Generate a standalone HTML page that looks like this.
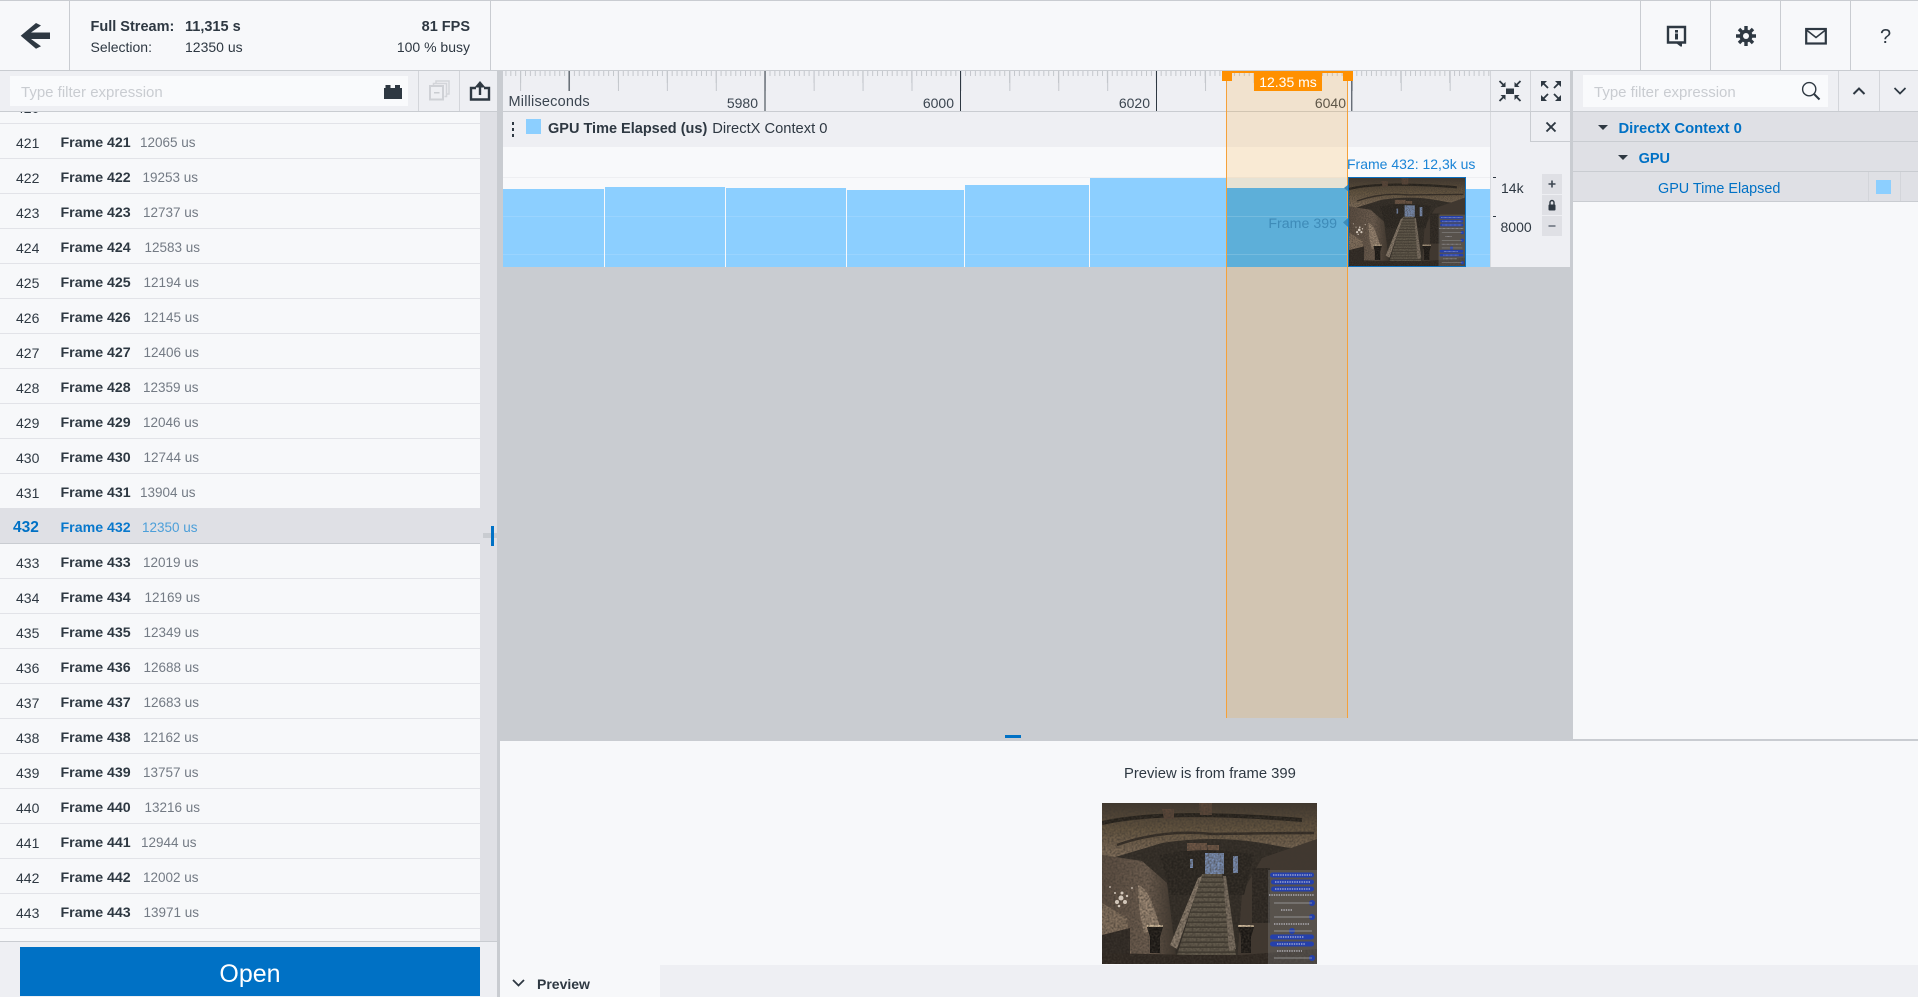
<!DOCTYPE html>
<html><head><meta charset="utf-8"><title>Frames</title>
<style>
*{box-sizing:border-box}
html,body{margin:0;padding:0;width:1918px;height:997px;overflow:hidden;background:#f7f8fa}
body{position:relative;font-family:"Liberation Sans",sans-serif;font-size:14px;color:#2e3842}
.a{position:absolute}
.t{position:absolute;white-space:nowrap;line-height:20px}
.b{font-weight:bold}
#list .r{position:absolute;left:0;width:480px;height:35px;border-bottom:1px solid #e2e3e8}
#list .n{position:absolute;left:16px;top:9px;line-height:20px}
#list .f{position:absolute;left:60.5px;top:9px;line-height:20px;font-weight:bold;font-size:14.2px}
#list .d{position:absolute;top:9px;line-height:20px;font-size:13.5px;color:#737a84}
#list .s{background:#dfe0e5;border-bottom:1px solid #c9ccd1;color:#0071c5;height:36px;top:508px}
#list .s .n{left:13px;top:10px;font-size:15.5px;font-weight:bold}
#list .s .f{top:10px;color:#0878cc}
#list .s .d{top:10px;color:#4c9fd9}
.ph{color:#c9ccd1;font-size:15px}
.blue{color:#0071c5}
</style></head><body>
<svg width="0" height="0" style="position:absolute">
<defs>
<filter id="nz" x="0" y="0" width="100%" height="100%"><feTurbulence type="fractalNoise" baseFrequency="0.5" numOctaves="2" seed="4"/><feColorMatrix values="0 0 0 0 0.05 0 0 0 0 0.04 0 0 0 0 0.03 1.5 0 0 0 -0.5"/></filter>
<linearGradient id="cg" x1="0" y1="0" x2="0" y2="1"><stop offset="0" stop-color="#40372e"/><stop offset=".45" stop-color="#63543f"/><stop offset="1" stop-color="#86735f"/></linearGradient>
<linearGradient id="lw" x1="0" y1="0" x2="1" y2="0"><stop offset="0" stop-color="#5a4c40"/><stop offset=".6" stop-color="#6e5e50"/><stop offset="1" stop-color="#3a322a"/></linearGradient>
<pattern id="stp" patternUnits="userSpaceOnUse" width="10" height="5"><rect width="10" height="5" fill="#625a4c"/><rect y="3.4" width="10" height="1.6" fill="#433d33"/></pattern>
<symbol id="scene" viewBox="0 0 215 161" preserveAspectRatio="none">
<rect width="215" height="161" fill="#2f2a24"/>
<path d="M0 0H215V50L160 40Q110 32 60 40L0 58Z" fill="url(#cg)"/>
<path d="M0 20Q60 6 200 17" fill="none" stroke="#231f19" stroke-width="4"/>
<path d="M15 42Q60 26 110 31Q170 30 212 30" fill="none" stroke="#322b24" stroke-width="2.5"/>
<path d="M60 6h12v10h-10zM97 0h13v12h-12z" fill="#5a4638"/>
<path d="M85 40h20v8h-20zM105 42h12v12h-10z" fill="#6e5645"/>
<path d="M0 52L40 58L65 80L75 161H0Z" fill="url(#lw)"/>
<path d="M36 82Q48 85 58 125L42 130Q35 100 36 82Z" fill="#9a8672"/>
<path d="M0 100L25 115L30 161H0Z" fill="#84715e"/>
<path d="M0 132L28 125V161H0Z" fill="#2d2722"/>
<path d="M215 36L160 55L140 90L135 161H215Z" fill="#413830"/>
<path d="M150 65h18v55h-18z" fill="#2a2520"/>
<path d="M58 52Q105 42 152 52L142 92H68Z" fill="#27231e"/>
<rect x="103" y="50" width="19" height="21" fill="#7a8fb5"/>
<path d="M88 56h3v9h-3zM131 53h5v17h-5z" fill="#7a8fb5"/>
<path d="M100 71H120L134 152H75Z" fill="url(#stp)"/>
<path d="M96 75L68 142L75 146L100 73Z" fill="#8a7c6c"/>
<path d="M121 73L127 148L134 146L124 73Z" fill="#7c7062"/>
<path d="M45 124h16l-3 10v16h-10v-16z" fill="#191613"/><rect x="45" y="122" width="16" height="2" fill="#cdb89a"/>
<path d="M136 124h16l-3 10v16h-10v-16z" fill="#191613"/><rect x="136" y="122" width="16" height="2" fill="#cdb89a"/>
<path d="M0 150L90 152H140L215 146V161H0Z" fill="#2d2620"/>
<rect width="215" height="161" filter="url(#nz)"/>
<g fill="#e8ddd0" opacity=".85"><circle cx="19" cy="95" r="2.5"/><circle cx="15" cy="99" r="2"/><circle cx="23" cy="99" r="2"/><circle cx="20" cy="90" r="1.5"/><circle cx="13" cy="90" r="1"/><circle cx="25" cy="93" r="1.2"/><circle cx="17" cy="103" r="1.3"/><circle cx="8" cy="84" r=".9"/><circle cx="30" cy="85" r=".9"/></g>
<rect x="166" y="67" width="49" height="94" fill="#8f8f8f" opacity=".3"/>
<g fill="#2540ab"><rect x="168" y="69.5" width="44" height="5" rx="2.5"/><rect x="169" y="76.5" width="43" height="5" rx="2.5"/><rect x="169" y="83.5" width="43" height="5" rx="2.5"/><rect x="168" y="131.5" width="44" height="5" rx="2.5"/><rect x="168" y="138.5" width="44" height="5" rx="2.5"/><circle cx="210" cy="100" r="3"/><circle cx="210" cy="114" r="3"/><circle cx="190" cy="128" r="3"/><circle cx="210" cy="155" r="3"/></g>
<g stroke="#d8d8e4" stroke-width=".9" stroke-dasharray="1.4 1" fill="none"><path d="M171 72h39M173 79h35M173 86h35M167 92h45M179 107h12M172 121h36M176 134h26M175 141h28M175 148h25"/></g>
<g stroke="#a5a5a5" stroke-width=".7" fill="none"><path d="M172 100h38M172 114h38M172 128h38M172 155h38"/></g>
</symbol>
<pattern id="t1" patternUnits="userSpaceOnUse" x="2.43" width="4.89" height="40"><rect width="1" height="5" fill="#c4c7cc"/></pattern>
<pattern id="t2" patternUnits="userSpaceOnUse" x="17.1" width="48.9" height="40"><rect width="1" height="12" fill="#c4c7cc"/></pattern>
<pattern id="t3" patternUnits="userSpaceOnUse" x="17.1" width="97.85" height="40"><rect x="0" width="1" height="20" fill="#c4c7cc"/><rect x="48.9" width="1" height="20" fill="#c4c7cc"/></pattern>
</defs></svg>

<!-- top header -->
<div class="a" style="left:0;top:0;width:1918px;height:1px;background:#c9ccd1"></div>
<div class="a" style="left:0;top:70px;width:1918px;height:1px;background:#c9ccd1"></div>
<div class="a" style="left:69px;top:0;width:1px;height:70px;background:#c9ccd1"></div>
<div class="a" style="left:490px;top:0;width:1px;height:70px;background:#c9ccd1"></div>
<div class="a" style="left:1640px;top:0;width:1px;height:70px;background:#c9ccd1"></div>
<div class="a" style="left:1710px;top:0;width:1px;height:70px;background:#c9ccd1"></div>
<div class="a" style="left:1780px;top:0;width:1px;height:70px;background:#c9ccd1"></div>
<div class="a" style="left:1850px;top:0;width:1px;height:70px;background:#c9ccd1"></div>
<svg class="a" style="left:15px;top:18px" width="40" height="36" viewBox="15 18 40 36"><path d="M20.7 35.7L36 23L41 25.5L31 32.5H50V39H31L41 46.2L36 48.7Z" fill="#2e3842"/></svg>
<div class="t b" style="left:90.5px;top:17px;font-size:14.5px">Full Stream:</div>
<div class="t b" style="left:185px;top:17px;font-size:14.5px">11,315 s</div>
<div class="t" style="left:90.5px;top:37px">Selection:</div>
<div class="t" style="left:185px;top:37px">12350 us</div>
<div class="t b" style="right:1448px;top:17px;font-size:14.5px">81 FPS</div>
<div class="t" style="right:1448px;top:37px">100 % busy</div>
<svg class="a" style="left:1664px;top:23px" width="24" height="24" viewBox="0 0 24 24"><path d="M4 4H21V19.5H4Z" fill="none" stroke="#2e3842" stroke-width="2.4"/><path d="M12 20h6v3.5h-1.5z" fill="#2e3842"/><rect x="11" y="7" width="3" height="2.6" fill="#2e3842"/><rect x="11" y="10.5" width="3" height="6" fill="#2e3842"/></svg>
<svg class="a" style="left:1734px;top:24px" width="24" height="24" viewBox="0 0 24 24"><g stroke="#2e3842" stroke-width="3.4"><path d="M12 2V22M2 12H22M5 5L19 19M19 5L5 19"/></g><circle cx="12" cy="12" r="6.5" fill="#2e3842"/><circle cx="12" cy="12" r="3" fill="#f7f8fa"/></svg>
<svg class="a" style="left:1805px;top:27px" width="22" height="18" viewBox="0 0 22 18"><rect x="1.2" y="2" width="19.6" height="14.5" fill="none" stroke="#2e3842" stroke-width="2.2"/><path d="M1.5 3L11 10.5L20.5 3" fill="none" stroke="#2e3842" stroke-width="1.6"/></svg>
<div class="t" style="left:1880px;top:26px;font-size:20px;line-height:22px;color:#2e3842">?</div>

<!-- left filter row -->
<div class="a" style="left:0;top:71px;width:497px;height:40px;background:#eeeff3"></div>
<div class="a" style="left:10px;top:76px;width:398px;height:30px;background:#f9fafc"></div>
<div class="t ph" style="left:21px;top:83px">Type filter expression</div>
<svg class="a" style="left:384px;top:84px" width="18" height="15" viewBox="0 0 18 15"><rect y="4" width="18" height="11" fill="#2e3842"/><rect x="1.5" y="1" width="5" height="3" fill="#2e3842"/><rect x="11" y="1" width="5" height="3" fill="#2e3842"/></svg>
<div class="a" style="left:418px;top:71px;width:1px;height:40px;background:#d3d5da"></div>
<div class="a" style="left:459px;top:71px;width:1px;height:40px;background:#d3d5da"></div>
<svg class="a" style="left:429px;top:80px" width="21" height="21" viewBox="0 0 21 21"><g fill="none" stroke="#d3d5da" stroke-width="1.5"><path d="M7 3V1H20V14H18"/><path d="M4.5 5.5V3.5H17.5V16.5H15.5"/></g><rect x="1" y="6" width="13" height="13.5" fill="#eeeff3" stroke="#cfd1d6" stroke-width="2"/><rect x="5" y="12" width="5.5" height="1.5" fill="#c9ccd1"/></svg>
<svg class="a" style="left:469px;top:80px" width="22" height="21" viewBox="0 0 22 21"><path d="M7 8H2V19.5H20V8H15" fill="none" stroke="#2e3842" stroke-width="2.4"/><path d="M11 15V3" stroke="#2e3842" stroke-width="2.4"/><path d="M5.5 7.5L11 1L16.5 7.5Z" fill="#2e3842"/></svg>
<div class="a" style="left:0;top:111px;width:497px;height:1px;background:#c9ccd1"></div>

<!-- list -->
<div id="list" class="a" style="left:0;top:112px;width:480px;height:829px;overflow:hidden">
<div style="position:absolute;left:0;top:-112px;width:480px;height:1000px">
<div class="r" style="top:89px"><span class="n">420</span><span class="f">Frame 420</span><span class="d" style="left:142px">14175 us</span></div>
<div class="r" style="top:124px"><span class="n">421</span><span class="f">Frame 421</span><span class="d" style="left:140px">12065 us</span></div>
<div class="r" style="top:159px"><span class="n">422</span><span class="f">Frame 422</span><span class="d" style="left:142.5px">19253 us</span></div>
<div class="r" style="top:194px"><span class="n">423</span><span class="f">Frame 423</span><span class="d" style="left:143px">12737 us</span></div>
<div class="r" style="top:229px"><span class="n">424</span><span class="f">Frame 424</span><span class="d" style="left:144.5px">12583 us</span></div>
<div class="r" style="top:264px"><span class="n">425</span><span class="f">Frame 425</span><span class="d" style="left:143.5px">12194 us</span></div>
<div class="r" style="top:299px"><span class="n">426</span><span class="f">Frame 426</span><span class="d" style="left:143.5px">12145 us</span></div>
<div class="r" style="top:334px"><span class="n">427</span><span class="f">Frame 427</span><span class="d" style="left:143.5px">12406 us</span></div>
<div class="r" style="top:369px"><span class="n">428</span><span class="f">Frame 428</span><span class="d" style="left:143px">12359 us</span></div>
<div class="r" style="top:404px"><span class="n">429</span><span class="f">Frame 429</span><span class="d" style="left:143px">12046 us</span></div>
<div class="r" style="top:439px"><span class="n">430</span><span class="f">Frame 430</span><span class="d" style="left:143.5px">12744 us</span></div>
<div class="r" style="top:474px"><span class="n">431</span><span class="f">Frame 431</span><span class="d" style="left:140px">13904 us</span></div>
<div class="r s"><span class="n">432</span><span class="f">Frame 432</span><span class="d" style="left:142px">12350 us</span></div>
<div class="r" style="top:544px"><span class="n">433</span><span class="f">Frame 433</span><span class="d" style="left:143px">12019 us</span></div>
<div class="r" style="top:579px"><span class="n">434</span><span class="f">Frame 434</span><span class="d" style="left:144.5px">12169 us</span></div>
<div class="r" style="top:614px"><span class="n">435</span><span class="f">Frame 435</span><span class="d" style="left:143.5px">12349 us</span></div>
<div class="r" style="top:649px"><span class="n">436</span><span class="f">Frame 436</span><span class="d" style="left:143.5px">12688 us</span></div>
<div class="r" style="top:684px"><span class="n">437</span><span class="f">Frame 437</span><span class="d" style="left:143.5px">12683 us</span></div>
<div class="r" style="top:719px"><span class="n">438</span><span class="f">Frame 438</span><span class="d" style="left:143px">12162 us</span></div>
<div class="r" style="top:754px"><span class="n">439</span><span class="f">Frame 439</span><span class="d" style="left:143px">13757 us</span></div>
<div class="r" style="top:789px"><span class="n">440</span><span class="f">Frame 440</span><span class="d" style="left:144.5px">13216 us</span></div>
<div class="r" style="top:824px"><span class="n">441</span><span class="f">Frame 441</span><span class="d" style="left:141px">12944 us</span></div>
<div class="r" style="top:859px"><span class="n">442</span><span class="f">Frame 442</span><span class="d" style="left:143px">12002 us</span></div>
<div class="r" style="top:894px"><span class="n">443</span><span class="f">Frame 443</span><span class="d" style="left:143.5px">13971 us</span></div>
</div></div>
<div class="a" style="left:480px;top:112px;width:17px;height:829px;background:#dfe0e5"></div>
<div class="a" style="left:483px;top:533px;width:14px;height:5px;background:#c9ccd1"></div>
<div class="a" style="left:491px;top:526px;width:3px;height:20px;background:#0071c5"></div>

<!-- open -->
<div class="a" style="left:0;top:941px;width:497px;height:56px;background:#eeeff3;border-top:1px solid #c9ccd1"></div>
<div class="a" style="left:20px;top:947px;width:460px;height:49px;background:#0071c5;color:#fff;font-size:25px;line-height:55px;text-align:center">Open</div>

<!-- splitter -->
<div class="a" style="left:497px;top:71px;width:6px;height:670px;background:#c9ccd1"></div>
<div class="a" style="left:497px;top:741px;width:3px;height:256px;background:#c9ccd1"></div>

<!-- ruler -->
<div class="a" style="left:503px;top:71px;width:1067px;height:40px;background:#eeeff3"></div>
<svg class="a" style="left:503px;top:71px" width="987" height="40">
<rect width="987" height="40" fill="url(#t1)"/><rect width="987" height="40" fill="url(#t2)"/><rect width="987" height="40" fill="url(#t3)"/>
<g fill="#2e3842"><rect x="65.6" width="1" height="20"/><rect x="261.5" width="1" height="40"/><rect x="457" width="1" height="40"/><rect x="653" width="1" height="40"/><rect x="848.3" width="1" height="40"/></g>
</svg>
<div class="t" style="left:508.5px;top:92px;font-size:14.5px;letter-spacing:.2px;color:#3b4550">Milliseconds</div>
<div class="t" style="right:1160px;top:93px;color:#3b4550">5980</div>
<div class="t" style="right:964px;top:93px;color:#3b4550">6000</div>
<div class="t" style="right:768px;top:93px;color:#3b4550">6020</div>
<div class="t" style="right:572px;top:93px;color:#3b4550">6040</div>
<div class="a" style="left:503px;top:111px;width:1067px;height:1px;background:#c9ccd1"></div>

<!-- track header -->
<div class="a" style="left:503px;top:112px;width:987px;height:35px;background:#eeeff3"></div>
<div class="a" style="left:511.5px;top:122px;width:2px;height:2.5px;background:#2e3842"></div>
<div class="a" style="left:511.5px;top:128px;width:2px;height:2.5px;background:#2e3842"></div>
<div class="a" style="left:511.5px;top:134px;width:2px;height:2.5px;background:#2e3842"></div>
<div class="a" style="left:525.5px;top:119px;width:15px;height:15px;background:#8ccfff"></div>
<div class="t b" style="left:548px;top:118.5px;font-size:14.5px">GPU Time Elapsed (us)</div>
<div class="t" style="left:712.3px;top:118.5px;font-size:14.7px">DirectX Context 0</div>

<!-- track strip -->
<div class="a" style="left:503px;top:147px;width:987px;height:30px;background:#f8f9fb"></div>
<div class="a" style="left:503px;top:177px;width:987px;height:90px;background:#f8f9fb;border-top:1px solid #eeeff2"></div>

<!-- gray area -->
<div class="a" style="left:503px;top:267px;width:1067px;height:474px;background:#c9ccd1"></div>

<!-- bars -->
<div class="a" style="left:503px;top:189px;width:101px;height:78px;background:#8ccfff"></div>
<div class="a" style="left:605px;top:187px;width:120px;height:80px;background:#8ccfff"></div>
<div class="a" style="left:726px;top:188px;width:120px;height:79px;background:#8ccfff"></div>
<div class="a" style="left:847px;top:190px;width:117px;height:77px;background:#8ccfff"></div>
<div class="a" style="left:965px;top:185px;width:124px;height:82px;background:#8ccfff"></div>
<div class="a" style="left:1090px;top:178px;width:136px;height:89px;background:#8ccfff"></div>
<div class="a" style="left:1466px;top:189px;width:24px;height:78px;background:#8ccfff"></div>
<div class="a" style="left:503px;top:216px;width:723px;height:1px;background:rgba(255,255,255,.12)"></div>
<div class="a" style="left:503px;top:254px;width:723px;height:1px;background:rgba(255,255,255,.12)"></div>
<div class="a" style="left:1466px;top:216px;width:24px;height:1px;background:rgba(255,255,255,.12)"></div>
<div class="a" style="left:1466px;top:254px;width:24px;height:1px;background:rgba(255,255,255,.12)"></div>

<!-- selection -->
<div class="a" style="left:1226px;top:71px;width:122px;height:647px;background:rgba(255,165,40,.18)"></div>
<div class="a" style="left:1227px;top:178px;width:120px;height:11px;background:#e6e2d4"></div>
<div class="a" style="left:1227px;top:188px;width:120px;height:79px;background:#5dafd9"></div>
<div class="a" style="left:1227px;top:216px;width:120px;height:1px;background:rgba(255,255,255,.15)"></div>
<div class="a" style="left:1227px;top:254px;width:120px;height:1px;background:rgba(255,255,255,.15)"></div>
<div class="a" style="left:1226px;top:71px;width:1px;height:647px;background:#f5a13a"></div>
<div class="a" style="left:1347px;top:71px;width:1px;height:647px;background:#f5a13a"></div>
<div class="a" style="left:1222px;top:71px;width:131px;height:2px;background:#ff9000"></div>
<div class="a" style="left:1222px;top:71px;width:10px;height:10px;background:#ff9000"></div>
<div class="a" style="left:1343px;top:71px;width:10px;height:10px;background:#ff9000"></div>
<div class="a" style="left:1254px;top:72px;width:68px;height:19px;background:#ff9000;color:#fff;font-size:14px;line-height:21px;text-align:center">12.35 ms</div>

<!-- frame labels + thumb -->
<div class="t" style="left:1347px;top:154px;color:#1a84d6;font-size:14px">Frame 432: 12,3k us</div>
<div class="t" style="right:581px;top:214px;color:#3e8bb8;font-size:14.2px">Frame 399</div>
<div class="a" style="left:1344px;top:184px;width:5px;height:8px;background:#3e8bb8;clip-path:polygon(100% 0,100% 100%,0 50%)"></div>
<div class="a" style="left:1343px;top:218px;width:5px;height:9px;background:#3e8bb8;clip-path:polygon(100% 0,100% 100%,0 50%)"></div>
<svg class="a" style="left:1348px;top:177px;border:1px solid #0a6fc0" width="118" height="90"><use href="#scene" width="116" height="88"/></svg>

<!-- right column of track -->
<div class="a" style="left:1490px;top:112px;width:80px;height:155px;background:#eeeff3;border-left:1px solid #d8dade"></div>
<div class="a" style="left:1490px;top:71px;width:1px;height:40px;background:#d3d5da"></div>
<div class="a" style="left:1530px;top:71px;width:1px;height:40px;background:#d3d5da"></div>
<div class="a" style="left:1530px;top:112px;width:40px;height:30px;border-left:1px solid #c9ccd1;border-bottom:1px solid #c9ccd1"></div>
<svg class="a" style="left:1498px;top:79px" width="24" height="24" viewBox="0 0 24 24"><rect x="8" y="9.5" width="8" height="5.5" fill="#2e3842"/><g stroke="#2e3842" stroke-width="1.8" fill="none"><path d="M1.5 2L7 7.5M22.5 2L17 7.5M1.5 22L7 16.5M22.5 22L17 16.5"/></g><g fill="#2e3842"><path d="M7.5 3V8H2.5Z"/><path d="M16.5 3V8H21.5Z"/><path d="M7.5 21V16H2.5Z"/><path d="M16.5 21V16H21.5Z"/></g></svg>
<svg class="a" style="left:1540px;top:80px" width="22" height="22" viewBox="0 0 22 22"><g stroke="#2e3842" stroke-width="1.8" fill="none"><path d="M3 3L8 8M19 3L14 8M3 19L8 14M19 19L14 14"/></g><g fill="#2e3842"><path d="M1 1H7L1 7Z"/><path d="M21 1H15L21 7Z"/><path d="M1 21H7L1 15Z"/><path d="M21 21H15L21 15Z"/></g></svg>
<svg class="a" style="left:1545px;top:121px" width="12" height="12" viewBox="0 0 12 12"><path d="M1.5 1.5L10.5 10.5M10.5 1.5L1.5 10.5" stroke="#2e3842" stroke-width="1.9"/></svg>
<div class="a" style="left:1493px;top:177px;width:3px;height:1px;background:#2e3842"></div>
<div class="a" style="left:1493px;top:216px;width:3px;height:1px;background:#2e3842"></div>
<div class="t" style="left:1501px;top:178px">14k</div>
<div class="t" style="left:1500.5px;top:217px">8000</div>
<div class="a" style="left:1542px;top:174px;width:20px;height:20px;background:#dfe0e5"></div>
<div class="a" style="left:1542px;top:195px;width:20px;height:20px;background:#dfe0e5"></div>
<div class="a" style="left:1542px;top:216px;width:20px;height:20px;background:#dfe0e5"></div>
<svg class="a" style="left:1542px;top:174px" width="20" height="62" viewBox="0 0 20 62"><path d="M6.5 10H13.5M10 6.5V13.5" stroke="#3d4651" stroke-width="1.6"/><rect x="6.5" y="30.5" width="7" height="6" rx="1" fill="#2e3842"/><path d="M8 31V28.5a2 2 0 0 1 4 0V31" fill="none" stroke="#2e3842" stroke-width="1.4"/><path d="M6.5 52H13.5" stroke="#6d7580" stroke-width="1.6"/></svg>

<!-- right panel -->
<div class="a" style="left:1570px;top:71px;width:3px;height:670px;background:#c9ccd1"></div>
<div class="a" style="left:1573px;top:71px;width:345px;height:40px;background:#eeeff3"></div>
<div class="a" style="left:1583px;top:75px;width:245px;height:32px;background:#f9fafc"></div>
<div class="t ph" style="left:1594px;top:83px">Type filter expression</div>
<svg class="a" style="left:1801px;top:81px" width="20" height="20" viewBox="0 0 20 20"><circle cx="8.2" cy="8.2" r="6.6" fill="none" stroke="#2e3842" stroke-width="1.4"/><path d="M13 13L18.5 18.5" stroke="#2e3842" stroke-width="2"/></svg>
<div class="a" style="left:1838px;top:71px;width:1px;height:40px;background:#d3d5da"></div>
<div class="a" style="left:1879px;top:71px;width:1px;height:40px;background:#d3d5da"></div>
<svg class="a" style="left:1852px;top:86px" width="14" height="10" viewBox="0 0 14 10"><path d="M1.5 8L7 2.5L12.5 8" fill="none" stroke="#2e3842" stroke-width="2"/></svg>
<svg class="a" style="left:1893px;top:86px" width="14" height="10" viewBox="0 0 14 10"><path d="M1.5 2L7 7.5L12.5 2" fill="none" stroke="#2e3842" stroke-width="1.7"/></svg>
<div class="a" style="left:1573px;top:111px;width:345px;height:1px;background:#c9ccd1"></div>
<div class="a" style="left:1573px;top:112px;width:345px;height:30px;background:#dfe0e5;border-bottom:1px solid #c9ccd1"></div>
<div class="a" style="left:1573px;top:142px;width:345px;height:30px;background:#dfe0e5;border-bottom:1px solid #c9ccd1"></div>
<div class="a" style="left:1573px;top:172px;width:345px;height:30px;background:#dfe0e5;border-bottom:1px solid #c9ccd1"></div>
<div class="a" style="left:1598px;top:125px;border-left:5px solid transparent;border-right:5px solid transparent;border-top:5px solid #2e3842"></div>
<div class="a" style="left:1618px;top:155px;border-left:5px solid transparent;border-right:5px solid transparent;border-top:5px solid #2e3842"></div>
<div class="t b blue" style="left:1618.5px;top:118.5px;font-size:14.8px">DirectX Context 0</div>
<div class="t b blue" style="left:1638.6px;top:148.5px;font-size:14.5px">GPU</div>
<div class="t blue" style="left:1658px;top:178.5px;font-size:14.4px">GPU Time Elapsed</div>
<div class="a" style="left:1868px;top:172px;width:1px;height:29px;background:#d3d5da"></div>
<div class="a" style="left:1900px;top:172px;width:1px;height:29px;background:#d3d5da"></div>
<div class="a" style="left:1876px;top:180px;width:15px;height:14px;background:#8ccfff"></div>

<!-- bottom panel -->
<div class="a" style="left:1573px;top:739px;width:345px;height:2px;background:#c9ccd1"></div>
<div class="a" style="left:1005px;top:735px;width:16px;height:3px;background:#0071c5"></div>
<div class="t" style="left:1124px;top:764px;font-size:14.8px">Preview is from frame 399</div>
<svg class="a" style="left:1102px;top:803px" width="215" height="161"><use href="#scene" width="215" height="161"/></svg>
<div class="a" style="left:660px;top:965px;width:1258px;height:32px;background:#eeeff3"></div>
<svg class="a" style="left:511px;top:978px" width="15" height="10" viewBox="0 0 15 10"><path d="M2 2L7.5 7.5L13 2" fill="none" stroke="#2e3842" stroke-width="1.8"/></svg>
<div class="t b" style="left:537px;top:974px;font-size:14px">Preview</div>
</body></html>
